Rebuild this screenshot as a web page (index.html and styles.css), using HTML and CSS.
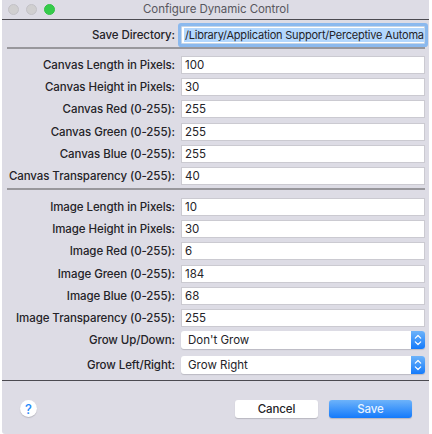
FILE: index.html
```html
<!DOCTYPE html>
<html lang="en">
<head>
<meta charset="utf-8">
<title>Configure Dynamic Control</title>
<link rel="stylesheet" href="styles.css">
</head>
<body>
<main class="window">
  <header class="titlebar">
    <div class="lights"><i></i><i></i><i class="zoom"></i></div>
    <h1>Configure Dynamic Control</h1>
  </header>
  <section class="directory row">
    <label>Save Directory:</label>
    <div class="field focused"><span>/Library/Application Support/Perceptive Automa</span></div>
  </section>
  <section class="group">
    <div class="row"><label>Canvas Length in Pixels:</label><div class="field">100</div></div>
    <div class="row"><label>Canvas Height in Pixels:</label><div class="field">30</div></div>
    <div class="row"><label>Canvas Red (0-255):</label><div class="field">255</div></div>
    <div class="row"><label>Canvas Green (0-255):</label><div class="field">255</div></div>
    <div class="row"><label>Canvas Blue (0-255):</label><div class="field">255</div></div>
    <div class="row"><label>Canvas Transparency (0-255):</label><div class="field">40</div></div>
  </section>
  <section class="group lower">
    <div class="row"><label>Image Length in Pixels:</label><div class="field">10</div></div>
    <div class="row"><label>Image Height in Pixels:</label><div class="field">30</div></div>
    <div class="row"><label>Image Red (0-255):</label><div class="field">6</div></div>
    <div class="row"><label>Image Green (0-255):</label><div class="field">184</div></div>
    <div class="row"><label>Image Blue (0-255):</label><div class="field">68</div></div>
    <div class="row"><label>Image Transparency (0-255):</label><div class="field">255</div></div>
  </section>
  <section class="menus">
    <div class="row"><label>Grow Up/Down:</label><div class="select"><span>Don't Grow</span><svg viewBox="0 0 14 18"><path d="M4.3 7.2 7 4.5l2.7 2.7M4.3 10.8 7 13.5l2.7-2.7"/></svg></div></div>
    <div class="row"><label>Grow Left/Right:</label><div class="select"><span>Grow Right</span><svg viewBox="0 0 14 18"><path d="M4.3 7.2 7 4.5l2.7 2.7M4.3 10.8 7 13.5l2.7-2.7"/></svg></div></div>
  </section>
  <footer class="footer">
    <button class="help">?</button>
    <button class="button">Cancel</button>
    <button class="button primary">Save</button>
  </footer>
</main>
</body>
</html>
```
FILE: styles.css
```css
* { box-sizing: border-box; }
body {
  margin: 0;
  background: #fff;
  font: 500 11.5px/18px Inter, "Liberation Sans", sans-serif;
  color: #242328;
}
.window {
  width: 427px;
  height: 434px;
  margin-left: 2px;
  background: #dddce5;
  border-bottom-left-radius: 3px;
  overflow: hidden;
}
.titlebar {
  display: flex;
  height: 20px;
  border-bottom: 1px solid #4b4a50;
}
.lights { display: flex; gap: 7px; padding: 4px 0 0 6px; width: 141px; }
.lights i {
  width: 11px;
  height: 11px;
  border-radius: 50%;
  background: #d0cfd0;
  border: 1px solid #c3c2c7;
}
.lights .zoom { background: #35cb4b; border-color: #30c344; }
h1 { margin: 0; font: 400 11.5px/19px Inter, sans-serif; letter-spacing: -0.06px; color: #58575e; white-space: nowrap; }
.row { display: grid; grid-template-columns: 173px 244px; column-gap: 6px; align-items: center; }
label { text-align: right; white-space: nowrap; line-height: 18px; letter-spacing: -0.08px; }
.field {
  height: 18px;
  padding-left: 3px;
  border: 1px solid #cbcad1;
  background: #fff;
  line-height: 17px;
  white-space: nowrap;
  font-weight: 400;
}
.directory { height: 28px; padding-top: 2px; }
.focused {
  border: 1px solid #c6d5e6;
  box-shadow: 0 0 0 3px #8bb9ee;
  border-radius: 1px;
  padding: 1px 0 1px 2px;
}
.focused span { display: block; height: 14px; padding-left: 1px; font-size: 11px; letter-spacing: -0.22px; line-height: 15px; background: #b3d7fd; }
.group {
  position: relative;
  display: grid;
  grid-auto-rows: 22.2px;
  padding-top: 6px;
  height: 141px;
}
.lower { padding-top: 7px; }
.group::before {
  content: "";
  position: absolute;
  top: -1px;
  left: 5px;
  right: 4px;
  height: 2px;
  background: #98979c;
}
.menus { display: grid; grid-template-rows: 20px 30px; height: 51px; border-bottom: 1px solid #4b4a50; }
.select {
  display: flex;
  height: 18px;
  border-radius: 3px;
  overflow: hidden;
  background: #fff;
  box-shadow: 0 1px 1px #bbbac3;
}
.select span { flex: 1; padding-left: 7px; font-weight: 400; }
.select svg { width: 14px; height: 18px; background: linear-gradient(#6db3fa, #147afb); }
.select path { fill: none; stroke: #fff; stroke-width: 1.2; stroke-linecap: round; stroke-linejoin: round; }
.footer { display: flex; align-items: center; height: 53px; padding: 2px 17px 0 18px; }
button { border: 0; font: inherit; padding: 0; color: inherit; }
.help {
  width: 17px;
  height: 17px;
  margin-right: auto;
  border-radius: 50%;
  background: #fff;
  color: #2389fa;
  font-size: 13px;
  box-shadow: 0 1px 1px #b8b7c0;
}
.button { width: 83px; height: 18px; border-radius: 3px; background: #fff; box-shadow: 0 1px 1px #b8b7c0; letter-spacing: -0.1px; }
.primary { margin-left: 11px; background: linear-gradient(#6db3fa, #147afb); color: #e8f3ff; }
```
